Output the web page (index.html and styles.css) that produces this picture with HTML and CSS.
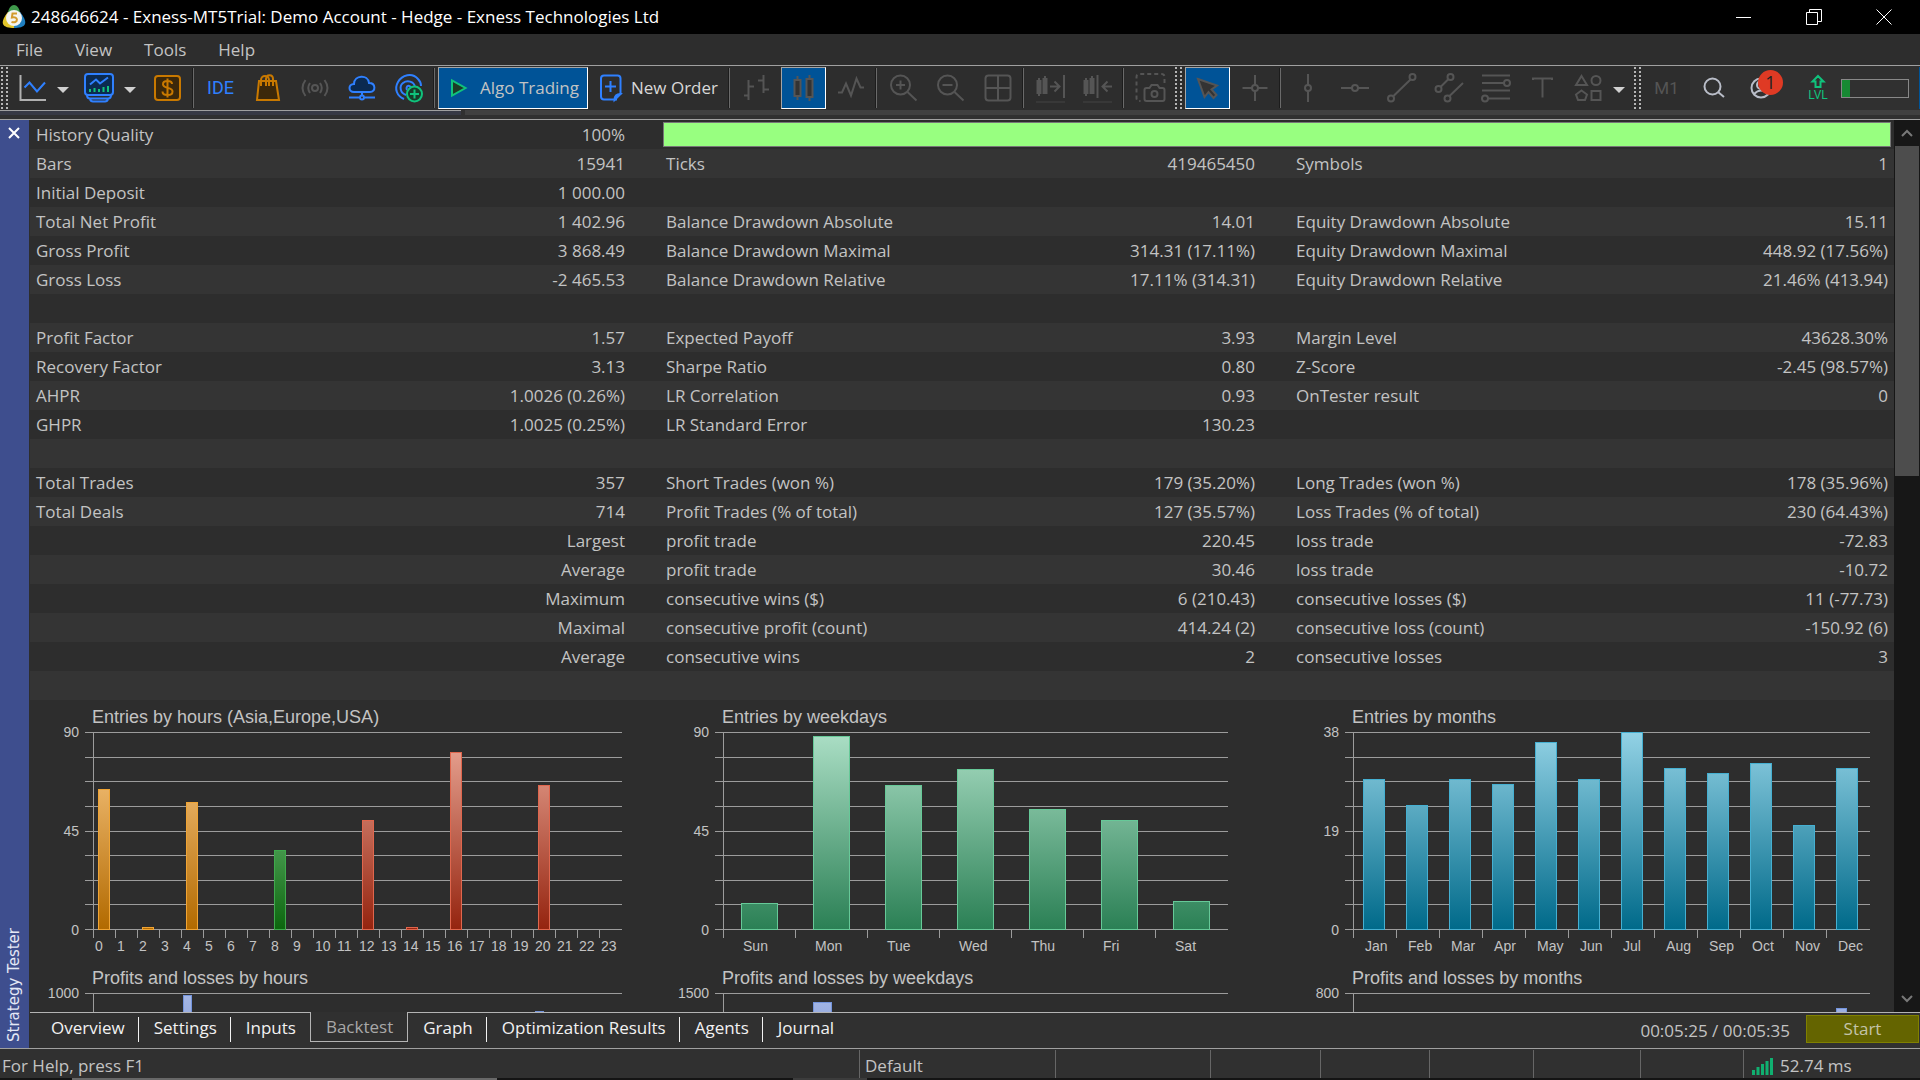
FILE: index.html
```html
<!DOCTYPE html>
<html lang="en">

<head>
    <meta charset="UTF-8">
    <meta name="viewport" content="width=device-width, initial-scale=1.0">
    <title>248646624 - Exness-MT5Trial: Demo Account - Hedge - Exness Technologies Ltd</title>
    <link rel="stylesheet" href="styles.css">
</head>

<body>
    <header class="titlebar">
        <svg class="logo" viewBox="0 0 24 24">
            <path d="M12 0c3 0 5 3 6 7H6c1-4 3-7 6-7z" fill="#3f9a4b" />
            <path d="M6 7c-4 5-6 9-5 12s6 4 11 4V12z" fill="#e3c62a" />
            <path d="M18 7c4 5 6 9 5 12s-6 4-11 4V12z" fill="#1f7fc0" />
            <circle cx="12" cy="13" r="8" fill="#f4f4f0" />
            <path d="M15 8.500h-4.500l-.6 4c3-.8 5 .3 5 2.300s-2.500 3.200-5.400 2" fill="none" stroke="#d29a2c" stroke-width="2" />
        </svg>
        <span class="title">248646624 - Exness-MT5Trial: Demo Account - Hedge - Exness Technologies Ltd</span>
        <div class="window-buttons">
            <button aria-label="Minimize"><svg viewBox="0 0 16 16"><path d="M0 8.500h15" /></svg></button>
            <button aria-label="Restore"><svg viewBox="0 0 16 16"><path d="M.5 3.500h11v12h-11zM3.500 3.500v-3h12v12h-4" /></svg></button>
            <button aria-label="Close"><svg viewBox="0 0 16 16"><path d="M.5.5l15 15M15.500.5l-15 15" /></svg></button>
        </div>
    </header>

    <nav class="menu">
        <button>File</button>
        <button>View</button>
        <button>Tools</button>
        <button>Help</button>
    </nav>

    <div class="toolbar">
        <span class="grip"></span>
        <button class="tool drop blue" aria-label="Charts">
            <svg viewBox="0 0 32 32"><path class="light" d="M3.500 3v25H29" /><path d="M7.500 15.500l5-5 7.500 9 8-9" /></svg>
            <i class="caret"></i>
        </button>
        <button class="tool drop blue" aria-label="Indicators">
            <svg viewBox="0 0 32 32">
                <rect x="1" y="2" width="28" height="21" rx="3" fill="#0b2a50" />
                <path d="M6 12.500l6-5 4 4 8-6M3 23c0 2.500 1 3.500 3 3.500h18c2 0 3-1 3-3.500M6 27c.5 2 1.500 2.500 3 2.500h12c1.500 0 2.500-.5 3-2.500" />
                <path class="green" d="M6 20v-3M10.500 20v-4M15 20v-3M19.500 20v-5M24 20v-6" />
            </svg>
            <i class="caret"></i>
        </button>
        <button class="tool orange" aria-label="Trade">
            <svg viewBox="0 0 32 32"><rect x="3" y="4" width="25" height="24" rx="3" /><path d="M20 12c0-2-2-3-4.500-3s-4.500 1-4.500 3.200c0 4.800 9.500 2.600 9.500 7.200 0 2.400-2.200 3.600-5 3.600s-5-1.200-5-3.500M15.500 6.500v19" fill="none" /></svg>
        </button>
        <span class="sep"></span>
        <button class="tool ide">IDE</button>
        <button class="tool orange" aria-label="Market">
            <svg viewBox="0 0 32 32"><path d="M7 9h17l3 19H5z" /><path d="M9 14V8c0-5.500 8-5.500 8 0v6M14 14V7c0-5 7-5 7 0v7" fill="none" /></svg>
        </button>
        <button class="tool" aria-label="Signals">
            <svg viewBox="0 0 32 32"><circle cx="16" cy="16" r="3" /><path d="M11 11q-3.500 5 0 10M21 11q3.500 5 0 10M6.500 8q-6 8 0 16M25.500 8q6 8 0 16" /></svg>
        </button>
        <button class="tool blue" aria-label="Virtual hosting">
            <svg viewBox="0 0 32 32"><path d="M8 20c-6 0-6-8 0-8 0-9 14-10 15-1 7 0 7 9 1 9z" fill="#0b2a50" /><path d="M3 25.500h10.500M18.500 25.500H29M16 20v3" /><circle cx="16" cy="25.500" r="2" /></svg>
        </button>
        <button class="tool blue" aria-label="Copy trading">
            <svg viewBox="0 0 32 32"><path d="M11 27C4 24 1 17 5 10S19 0 25 7c2 2 3 4 3 7M13 23c-6-2-7-9-3-12s11-2 12 4M14 18c-2-4 3-6 4-2" /><g class="green"><circle cx="21.500" cy="22" r="7.500" fill="#173d29" /><path d="M21.500 17.500v9M17 22h9" /></g></svg>
        </button>
        <span class="sep"></span>
        <button class="tool algo active">
            <svg viewBox="0 0 32 32"><path class="green" d="M8 8.500v15L21.500 16z" fill="#1d3a26" /></svg>Algo Trading
        </button>
        <button class="tool order blue">
            <svg viewBox="0 0 32 32"><path d="M22 27.500H9q-3 0-3-3v-18q0-3 3-3h13.500q3 0 3 3v16M15.500 9v11M10 14.500h11" /><path d="M19.500 28c0-4 1-6 6-6z" fill="#2f80ff" /></svg>New Order
        </button>
        <span class="sep"></span>
        <button class="tool" aria-label="Bar chart">
            <svg viewBox="0 0 32 32"><path d="M7.500 8v20M7.500 14.500H13M3 23.500h4.500M22.500 3v18M17 8.500h5.500M22.500 17.500H28" /></svg>
        </button>
        <button class="tool active" aria-label="Candlesticks">
            <svg viewBox="0 0 32 32"><path d="M9.500 4v4M9.500 24v4M21.500 3v4M21.500 25v4" /><path d="M6.500 8h6v16h-6zM18.500 7h6v18h-6z" fill="#333" /></svg>
        </button>
        <button class="tool" aria-label="Line chart">
            <svg viewBox="0 0 32 32"><path d="M3 20.500h4l4-9 5 12 5.500-17 4 9H29" /></svg>
        </button>
        <span class="sep"></span>
        <button class="tool" aria-label="Zoom in">
            <svg viewBox="0 0 32 32"><circle cx="12.500" cy="13" r="9.500" /><path d="M19.500 20l9 8.500M12.500 8.500v9M8 13h9" /></svg>
        </button>
        <button class="tool" aria-label="Zoom out">
            <svg viewBox="0 0 32 32"><circle cx="12.500" cy="13" r="9.500" /><path d="M19.500 20l9 8.500M7.500 13h10" /></svg>
        </button>
        <button class="tool" aria-label="Tile windows">
            <svg viewBox="0 0 32 32"><rect x="3.500" y="3.500" width="25" height="25" rx="3" /><path d="M16 4v24M4 16h24" /></svg>
        </button>
        <span class="sep"></span>
        <button class="tool" aria-label="Auto scroll">
            <svg viewBox="0 0 32 32"><path d="M2.500 9h3v12h-3zM8.500 7h3v14h-3zM4 6v18M10 4v18M15 14.500h9M19.500 9.500l5 5-5 5M29 3v23" /><path class="faint" d="M1 30h29" /></svg>
        </button>
        <button class="tool" aria-label="Chart shift">
            <svg viewBox="0 0 32 32"><path d="M2.500 9h3v12h-3zM8.500 7h3v14h-3zM4 6v18M10 4v18M15.500 3v23M30 14.500h-9M25.500 9.500l-5 5 5 5" /><path class="faint" d="M1 30h29" /></svg>
        </button>
        <span class="sep"></span>
        <button class="tool" aria-label="Screenshot">
            <svg viewBox="0 0 32 32"><path d="M29.500 11V5q0-3-3-3h-22q-3 0-3 3v21q0 3 3 3h1" stroke-dasharray="4 3" /><path d="M9.500 18q0-2 2-2h3l2-3h6l2 3h3q2 0 2 2v9q0 2-2 2h-16q-2 0-2-2z" /><circle cx="19.500" cy="22" r="3" /></svg>
        </button>
        <span class="grip"></span>
        <button class="tool active" aria-label="Cursor">
            <svg viewBox="0 0 32 32"><path d="M6 7l19 6.500-5.500 4 5 5.500-3 3-5-6-4 5z" fill="#333" /></svg>
        </button>
        <button class="tool" aria-label="Crosshair">
            <svg viewBox="0 0 32 32"><circle cx="16" cy="16" r="3" /><path d="M16 3v10M16 19v10M3.500 16H13M19 16h9.500" /></svg>
        </button>
        <span class="sep"></span>
        <button class="tool" aria-label="Vertical line">
            <svg viewBox="0 0 32 32"><circle cx="16" cy="16" r="3" /><path d="M16 2v11M16 19v11" /></svg>
        </button>
        <button class="tool" aria-label="Horizontal line">
            <svg viewBox="0 0 32 32"><circle cx="16" cy="16" r="3" /><path d="M2 16h11M19 16h11" /></svg>
        </button>
        <button class="tool" aria-label="Trend line">
            <svg viewBox="0 0 32 32"><circle cx="5" cy="26.500" r="3" /><circle cx="26.500" cy="5" r="3" /><path d="M7.500 24L24.500 7.500" /></svg>
        </button>
        <button class="tool" aria-label="Equidistant channel">
            <svg viewBox="0 0 32 32"><circle cx="5.500" cy="17" r="3" /><circle cx="17.500" cy="5" r="3" /><circle cx="14.500" cy="26.500" r="3" /><path d="M7.500 15l8-8M16.500 24L30 11" /></svg>
        </button>
        <button class="tool" aria-label="Fibonacci">
            <svg viewBox="0 0 32 32"><path d="M2 3.500h28M2 11h22M2 18.500h28M8 26.500h22" /><circle cx="27" cy="11" r="3" /><circle cx="5" cy="26.500" r="3" /></svg>
        </button>
        <button class="tool" aria-label="Text label">
            <svg viewBox="0 0 32 32"><path d="M6 8V6.500h19V8M15.500 7v18.500" /></svg>
        </button>
        <button class="tool drop" aria-label="Shapes">
            <svg viewBox="0 0 32 32"><path d="M8.500 4L14 13H3zM8.500 18.500l5.500 4-2 5.500H5l-2-5.500zM18.500 19h9v9h-9z" /><circle cx="23" cy="8.500" r="4.500" /></svg>
            <i class="caret"></i>
        </button>
        <span class="grip"></span>
        <button class="tool period">M1</button>
        <div class="toolbar-end">
            <button class="tool pale" aria-label="Search">
                <svg viewBox="0 0 32 32"><circle cx="14.500" cy="14.500" r="8" /><path d="M20 20l6 5" /></svg>
            </button>
            <button class="tool pale account" aria-label="Account">
                <svg viewBox="0 0 32 32"><circle cx="16" cy="16" r="9.500" /><circle cx="16" cy="13" r="4" /><path d="M9 22q7-7 14 0" /></svg>
                <span class="badge">1</span>
            </button>
            <button class="tool level" aria-label="Level">
                <svg class="green" viewBox="0 0 32 32"><path d="M16 4l5.500 5.500h-3V15h-5V9.500h-3z" /><text x="16" y="27" text-anchor="middle">LVL</text></svg>
            </button>
            <div class="load"><div class="load-fill"></div></div>
            <span class="edge"></span>
        </div>
    </div>
    <div class="dock-strip"><span></span></div>

    <main class="tester">
        <aside class="side">
            <button class="side-close" aria-label="Close panel"><svg viewBox="0 0 12 12"><path d="M1 1l10 10M11 1L1 11" /></svg></button>
            <span class="side-title">Strategy Tester</span>
        </aside>
        <div class="content">
            <div class="report-wrap">
                <div class="report">
                    <table class="stats">
                        <colgroup>
                            <col class="name-1"><col class="value-1">
                            <col class="name-2"><col class="value-2">
                            <col class="name-3"><col class="value-3">
                        </colgroup>
                        <tr><td>History Quality</td><td>100%</td><td colspan="4" class="quality"><div class="quality-bar"></div></td></tr>
                        <tr><td>Bars</td><td>15941</td><td>Ticks</td><td>419465450</td><td>Symbols</td><td>1</td></tr>
                        <tr><td>Initial Deposit</td><td>1 000.00</td><td></td><td></td><td></td><td></td></tr>
                        <tr><td>Total Net Profit</td><td>1 402.96</td><td>Balance Drawdown Absolute</td><td>14.01</td><td>Equity Drawdown Absolute</td><td>15.11</td></tr>
                        <tr><td>Gross Profit</td><td>3 868.49</td><td>Balance Drawdown Maximal</td><td>314.31 (17.11%)</td><td>Equity Drawdown Maximal</td><td>448.92 (17.56%)</td></tr>
                        <tr><td>Gross Loss</td><td>-2 465.53</td><td>Balance Drawdown Relative</td><td>17.11% (314.31)</td><td>Equity Drawdown Relative</td><td>21.46% (413.94)</td></tr>
                        <tr><td></td><td></td><td></td><td></td><td></td><td></td></tr>
                        <tr><td>Profit Factor</td><td>1.57</td><td>Expected Payoff</td><td>3.93</td><td>Margin Level</td><td>43628.30%</td></tr>
                        <tr><td>Recovery Factor</td><td>3.13</td><td>Sharpe Ratio</td><td>0.80</td><td>Z-Score</td><td>-2.45 (98.57%)</td></tr>
                        <tr><td>AHPR</td><td>1.0026 (0.26%)</td><td>LR Correlation</td><td>0.93</td><td>OnTester result</td><td>0</td></tr>
                        <tr><td>GHPR</td><td>1.0025 (0.25%)</td><td>LR Standard Error</td><td>130.23</td><td></td><td></td></tr>
                        <tr><td></td><td></td><td></td><td></td><td></td><td></td></tr>
                        <tr><td>Total Trades</td><td>357</td><td>Short Trades (won %)</td><td>179 (35.20%)</td><td>Long Trades (won %)</td><td>178 (35.96%)</td></tr>
                        <tr><td>Total Deals</td><td>714</td><td>Profit Trades (% of total)</td><td>127 (35.57%)</td><td>Loss Trades (% of total)</td><td>230 (64.43%)</td></tr>
                        <tr><td></td><td>Largest</td><td>profit trade</td><td>220.45</td><td>loss trade</td><td>-72.83</td></tr>
                        <tr><td></td><td>Average</td><td>profit trade</td><td>30.46</td><td>loss trade</td><td>-10.72</td></tr>
                        <tr><td></td><td>Maximum</td><td>consecutive wins ($)</td><td>6 (210.43)</td><td>consecutive losses ($)</td><td>11 (-77.73)</td></tr>
                        <tr><td></td><td>Maximal</td><td>consecutive profit (count)</td><td>414.24 (2)</td><td>consecutive loss (count)</td><td>-150.92 (6)</td></tr>
                        <tr><td></td><td>Average</td><td>consecutive wins</td><td>2</td><td>consecutive losses</td><td>3</td></tr>
                        <tr><td></td><td></td><td></td><td></td><td></td><td></td></tr>
                    </table>
                    <div class="charts" id="charts"></div>
                </div>
                <div class="scrollbar">
                    <button aria-label="Scroll up"><svg viewBox="0 0 12 10"><path d="M1 8l5-5 5 5" /></svg></button>
                    <div class="thumb"></div>
                    <button aria-label="Scroll down"><svg viewBox="0 0 12 10"><path d="M1 2l5 5 5-5" /></svg></button>
                </div>
            </div>
            <div class="tabs">
                <button>Overview</button>
                <button>Settings</button>
                <button>Inputs</button>
                <button class="current">Backtest</button>
                <button>Graph</button>
                <button>Optimization Results</button>
                <button>Agents</button>
                <button>Journal</button>
                <div class="tabs-end">
                    <span>00:05:25 / 00:05:35</span>
                    <button class="start">Start</button>
                </div>
            </div>
        </div>
    </main>

    <footer class="status">
        <span>For Help, press F1</span>
        <span>Default</span>
        <span></span>
        <span></span>
        <span></span>
        <span></span>
        <span></span>
        <span></span>
        <span class="ping">
            <svg viewBox="0 0 22 18"><path d="M1.500 18v-5M6 18v-8M10.500 18V7M15 18V4M19.500 18V1" /></svg>52.74 ms
        </span>
    </footer>
    <div class="taskbar-edge"><span></span><span></span></div>

    <script>
        const HOURS = [...Array(24).keys()];
        const DAYS = ["Sun", "Mon", "Tue", "Wed", "Thu", "Fri", "Sat"];
        const MONTHS = ["Jan", "Feb", "Mar", "Apr", "May", "Jun", "Jul", "Aug", "Sep", "Oct", "Nov", "Dec"];

        const charts = [
            { kind: "hours", title: "Entries by hours (Asia,Europe,USA)", labels: HOURS, scale: [90, 45, 0], values: { 0: 64, 2: 1, 4: 58, 8: 36, 12: 50, 14: 1, 16: 81, 20: 66 } },
            { kind: "weekdays", title: "Entries by weekdays", labels: DAYS, scale: [90, 45, 0], values: [12, 88, 66, 73, 55, 50, 13] },
            { kind: "months", title: "Entries by months", labels: MONTHS, scale: [38, 19, 0], values: [29, 24, 29, 28, 36, 29, 38, 31, 30, 32, 20, 31] },
            { kind: "hours profit", title: "Profits and losses by hours", labels: HOURS, scale: [1000], values: { 4: 990, 20: 908 } },
            { kind: "weekdays profit", title: "Profits and losses by weekdays", labels: DAYS, scale: [1500], values: { 1: 1431 } },
            { kind: "months profit", title: "Profits and losses by months", labels: MONTHS, scale: [800], values: { 11: 739 } }
        ];

        // trading session of an hour: Asia, Europe, USA
        function session(hour) {
            if (hour < 8) return "asia";
            return hour < 12 ? "europe" : "usa";
        }

        function drawChart(chart) {
            const bars = chart.labels.map((label, i) => {
                const value = chart.values[i];
                if (!value) return `<div class="slot"></div>`;
                const height = Math.round(value / chart.scale[0] * 197) + 1;
                const extra = chart.kind === "hours" ? session(i) : "";
                return `<div class="slot"><div class="bar ${extra}" style="height: ${height}px"></div></div>`;
            }).join("");

            // profit charts have no captions under the axis
            const captions = chart.kind.includes("profit") ? [] : chart.labels;

            return `<section class="chart ${chart.kind}">
                <h2>${chart.title}</h2>
                <div class="graph">
                    <div class="y-axis">${chart.scale.map(value => `<span>${value}</span>`).join("")}</div>
                    <div class="plot">
                        <div class="lines">${"<i></i>".repeat(9)}</div>
                        <div class="bars">${bars}</div>
                    </div>
                </div>
                <div class="x-axis">${captions.map(label => `<span>${label}</span>`).join("")}</div>
            </section>`;
        }

        document.getElementById("charts").innerHTML = charts.map(drawChart).join("");
    </script>
</body>

</html>
```
FILE: styles.css
```css
* {
    box-sizing: border-box;
}

body {
    margin: 0;
    height: 100vh;
    overflow: hidden;
    display: flex;
    flex-direction: column;
    background: #2d2d2d;
    color: #c3c3c3;
    font-family: "Open Sans", "Noto Sans", sans-serif;
    font-size: 17px;
    line-height: 28px;
}

button {
    margin: 0;
    padding: 0;
    border: none;
    background: none;
    color: inherit;
    font: inherit;
    white-space: nowrap;
}

svg {
    display: block;
    flex: none;
    fill: none;
}

/* Title bar and menu */
.titlebar {
    flex: none;
    height: 34px;
    display: flex;
    align-items: center;
    background: #000;
    color: #fff;
}

.logo {
    width: 24px;
    height: 24px;
    margin: 0 5px 0 2px;
}

.window-buttons {
    margin-left: auto;
    display: flex;
    padding-right: 1px;
}

.window-buttons button {
    width: 70px;
    height: 34px;
    display: flex;
    align-items: center;
    justify-content: center;
}

.window-buttons svg {
    width: 16px;
    height: 16px;
    stroke: #fff;
}

.menu {
    flex: none;
    height: 31px;
    display: flex;
    align-items: center;
    gap: 32px;
    padding-left: 16px;
}

/* Toolbar */
.toolbar {
    flex: none;
    height: 45px;
    display: flex;
    align-items: center;
    border-top: 1px solid #a0a0a0;
}

.grip {
    flex: none;
    width: 10px;
    height: 42px;
    background:
        repeating-linear-gradient(#b5b5b5 0 2px, transparent 2px 4px) 1px 0 / 2px 100% no-repeat,
        repeating-linear-gradient(#b5b5b5 0 2px, transparent 2px 4px) 6px 0 / 2px 100% no-repeat;
}

.sep {
    flex: none;
    width: 2px;
    height: 40px;
    margin: 0 3px 0 1px;
    background: #6a6a6a;
    border-left: 1px solid #1c1c1c;
}

.tool {
    flex: none;
    width: 45px;
    height: 42px;
    margin: 0 1px;
    display: flex;
    align-items: center;
    justify-content: center;
    color: #555;
}

.tool svg {
    width: 32px;
    height: 32px;
    stroke: currentColor;
    stroke-width: 2;
}

.tool.active {
    background: #005397;
    border: 1px solid #fff;
    border-top-color: #a5a5a5;
    border-left-color: #a5a5a5;
}

.tool.drop {
    width: 65px;
    justify-content: flex-start;
    padding-left: 6px;
}

.caret {
    margin: 4px 0 0 8px;
    border: 6px solid transparent;
    border-top-color: #d0d0d0;
    border-bottom: none;
}

.blue {
    color: #2f80ff;
}

.orange {
    color: #c97900;
}

.tool.orange svg {
    fill: #3c280a;
}

.pale {
    color: #b9bdc8;
}

.tool .green {
    stroke: #10c27c;
}

.tool .light {
    stroke: #b0b0b0;
}

.tool .faint {
    stroke: #383838;
}

.ide {
    color: #2f80ff;
    font-family: Roboto, sans-serif;
    font-size: 18px;
}

.tool.algo {
    width: 150px;
    margin: 0;
    justify-content: flex-start;
    padding-left: 5px;
    gap: 4px;
    color: #c3c3c3;
}

.tool.order {
    width: 137px;
    justify-content: flex-start;
    padding-left: 6px;
    gap: 4px;
    color: #d8d8d8;
}

.tool.order svg {
    stroke: #2f80ff;
}

.period {
    font-family: Roboto, sans-serif;
    font-size: 17px;
}

.toolbar-end {
    flex: 1;
    height: 44px;
    display: flex;
    align-items: center;
    background: #303030;
}

.account {
    position: relative;
}

.badge {
    position: absolute;
    top: 3px;
    right: 0;
    width: 25px;
    height: 25px;
    border-radius: 50%;
    background: #df3a24;
    color: #222;
    font-size: 18px;
    line-height: 25px;
    text-align: center;
}

.level {
    margin-left: 11px;
}

.level text {
    fill: #10c27c;
    stroke: none;
    font-family: Roboto, sans-serif;
    font-size: 12px;
}

.load {
    width: 68px;
    height: 19px;
    border: 1px solid #888;
}

.load-fill {
    width: 8px;
    height: 17px;
    background: #178a33;
}

.edge {
    width: 1px;
    height: 42px;
    margin-left: auto;
    background: #005397;
}

.dock-strip {
    flex: none;
    height: 10px;
    border-bottom: 1px solid #a0a0a0;
    background: #303030;
    display: flex;
    gap: 4px;
}

.dock-strip span {
    width: 24%;
    height: 5px;
    background: #373944;
    border-top: 1px solid #a0a0a0;
}

.dock-strip::after {
    content: "";
    flex: 1;
    height: 5px;
    background: #404040;
}

/* Strategy tester panel */
.tester {
    flex: 1;
    min-height: 0;
    display: flex;
}

.side {
    flex: none;
    width: 29px;
    display: flex;
    flex-direction: column;
    align-items: center;
    justify-content: space-between;
    padding: 7px 2px 6px 0;
    background: #3e4e8e;
    color: #e4e8f6;
}

.side-close svg {
    width: 12px;
    height: 12px;
    stroke: #fff;
    stroke-width: 2;
}

.side-title {
    writing-mode: vertical-rl;
    transform: rotate(180deg);
    font-family: "DejaVu Sans", sans-serif;
    font-size: 15px;
}

.content {
    flex: 1;
    min-width: 0;
    display: flex;
    flex-direction: column;
    padding-left: 1px;
}

.report-wrap {
    flex: 1;
    min-height: 0;
    display: flex;
}

.report {
    flex: 1;
    overflow: hidden;
}

.stats {
    width: 100%;
    table-layout: fixed;
    border-collapse: collapse;
}

.name-1,
.name-2 {
    width: 17.8%;
}

.value-1,
.value-2 {
    width: 16%;
}

.name-3 {
    width: 17.4%;
}

.stats tr {
    height: 29px;
}

.stats tr:nth-child(even) {
    background: #343434;
}

.stats td {
    padding: 1px 6px 0;
    white-space: nowrap;
}

.stats td:nth-child(even) {
    padding-right: 35px;
    text-align: right;
}

.stats td:nth-child(6) {
    padding-right: 6px;
}

.stats td.quality {
    padding: 0 3px;
}

.quality-bar {
    height: 25px;
    background: #98ff80;
    border: 1px solid #777;
}

/* Charts */
.charts {
    display: grid;
    grid-template-columns: 33.8% 33.8% 32.4%;
    font-family: "Liberation Sans", Arial, sans-serif;
    font-size: 14px;
    line-height: 18px;
}

.chart {
    padding-top: 7px;
}

.hours {
    padding-right: 39px;
}

.weekdays {
    padding-right: 63px;
}

.months {
    padding-right: 25px;
}

.chart h2 {
    margin: 0 0 5px 62px;
    font-size: 18px;
    font-weight: normal;
    line-height: 20px;
    white-space: nowrap;
}

.graph {
    display: flex;
    height: 198px;
}

.y-axis {
    width: 63px;
    margin: -9px 0;
    padding-right: 14px;
    display: flex;
    flex-direction: column;
    justify-content: space-between;
    text-align: right;
}

.plot {
    flex: 1;
    position: relative;
    border-left: 1px solid #9c9c9c;
}

.lines {
    position: absolute;
    inset: 0 -1px 0 -9px;
    display: flex;
    flex-direction: column;
    justify-content: space-between;
}

.lines i {
    height: 1px;
    background: #9c9c9c;
}

.bars {
    position: relative;
    height: 100%;
    margin-left: -1px;
    display: flex;
}

.slot {
    flex: 1;
    display: flex;
    align-items: flex-end;
}

.bar {
    width: 12px;
    margin-left: 5px;
    border: 1px solid #66c998;
    background: linear-gradient(#acdfc6, #2b8055) bottom / 100% 197px;
}

.asia {
    border-color: #f0a434;
    background-image: linear-gradient(#ffce8d, #b26a00);
}

.europe {
    border-color: #3fa94c;
    background-image: linear-gradient(#96dea4, #0c660e);
}

.usa {
    border-color: #e0664d;
    background-image: linear-gradient(#ecaa99, #95240f);
}

.weekdays .bar {
    width: 37px;
    margin-left: 18px;
}

.months .bar {
    width: 22px;
    margin-left: 10px;
    border-color: #45b0d2;
    background-image: linear-gradient(#93d2e5, #006a8a);
}

.profit .bar {
    width: 9px;
    margin-left: 2px;
    border-color: #7394dc;
    background-image: linear-gradient(#a6b8e6, #3b5bb0);
}

.weekdays.profit .bar {
    width: 19px;
    margin-left: 18px;
}

.months.profit .bar {
    width: 11px;
    margin-left: 10px;
}

.x-axis {
    display: flex;
    height: 31px;
    margin-left: 63px;
}

.x-axis span {
    flex: 1 1 0;
    min-width: 0;
    padding: 7px 0 0 2px;
    background: linear-gradient(#9c9c9c, #9c9c9c) 0 0 / 1px 8px no-repeat;
}

.weekdays .x-axis span {
    padding-left: 20px;
}

.months .x-axis span {
    padding-left: 12px;
}

/* Scroll bar */
.scrollbar {
    flex: none;
    width: 26px;
    padding: 0 1px;
    display: flex;
    flex-direction: column;
    background: #171717;
}

.scrollbar button {
    height: 26px;
    display: flex;
    align-items: center;
    justify-content: center;
}

.scrollbar svg {
    width: 12px;
    height: 10px;
    stroke: #787878;
    stroke-width: 2;
}

.thumb {
    height: 37%;
    margin-bottom: auto;
    background: #4d4d4d;
}

/* Tabs */
.tabs {
    flex: none;
    height: 36px;
    display: flex;
    background: #303030;
    color: #f2f2f2;
}

.tabs::before {
    content: "";
    width: 6px;
    border-top: 1px solid #b4b4b4;
}

.tabs button {
    height: 30px;
    padding: 0 14px 0 15px;
    border-top: 1px solid #b4b4b4;
    background: linear-gradient(#f2f2f2, #f2f2f2) right 4px / 1px 25px no-repeat;
}

.tabs button:nth-child(3),
.tabs button:nth-child(8) {
    background: none;
}

.tabs .current {
    padding-top: 1px;
    border: 1px solid #b4b4b4;
    border-top: none;
    background: none;
    color: #a8a8a8;
}

.tabs-end {
    flex: 1;
    display: flex;
    align-items: center;
    justify-content: flex-end;
    gap: 16px;
    padding-right: 1px;
    border-top: 1px solid #b4b4b4;
    color: #c3c3c3;
}

.tabs .tabs-end .start {
    width: 113px;
    height: 28px;
    margin-bottom: 3px;
    padding: 0;
    border: 1px solid #808000;
    background: #646400;
    color: #c3c3a8;
    line-height: 26px;
}

/* Status bar */
.status {
    flex: none;
    height: 30px;
    display: grid;
    grid-template-columns: 859fr 196fr 155fr 110fr 109fr 104fr 107fr 103fr 177fr;
    border-top: 1px solid #a0a0a0;
    background: #303030;
}

.status span {
    margin-top: 1px;
    padding-left: 5px;
    border-left: 1px solid #666;
    line-height: 32px;
}

.status span:first-child {
    padding-left: 2px;
    border: none;
}

.status .ping {
    display: flex;
    align-items: center;
    gap: 6px;
    padding-left: 8px;
}

.ping svg {
    width: 22px;
    height: 18px;
    stroke: #10b070;
    stroke-width: 3;
}

.taskbar-edge {
    flex: none;
    height: 2px;
    display: flex;
    gap: 16%;
    padding-left: 72px;
    background: #141414;
}

.taskbar-edge span {
    width: 23%;
    background: #686868;
}

.taskbar-edge span + span {
    width: 4%;
    background: #3c3c3c;
}
```
